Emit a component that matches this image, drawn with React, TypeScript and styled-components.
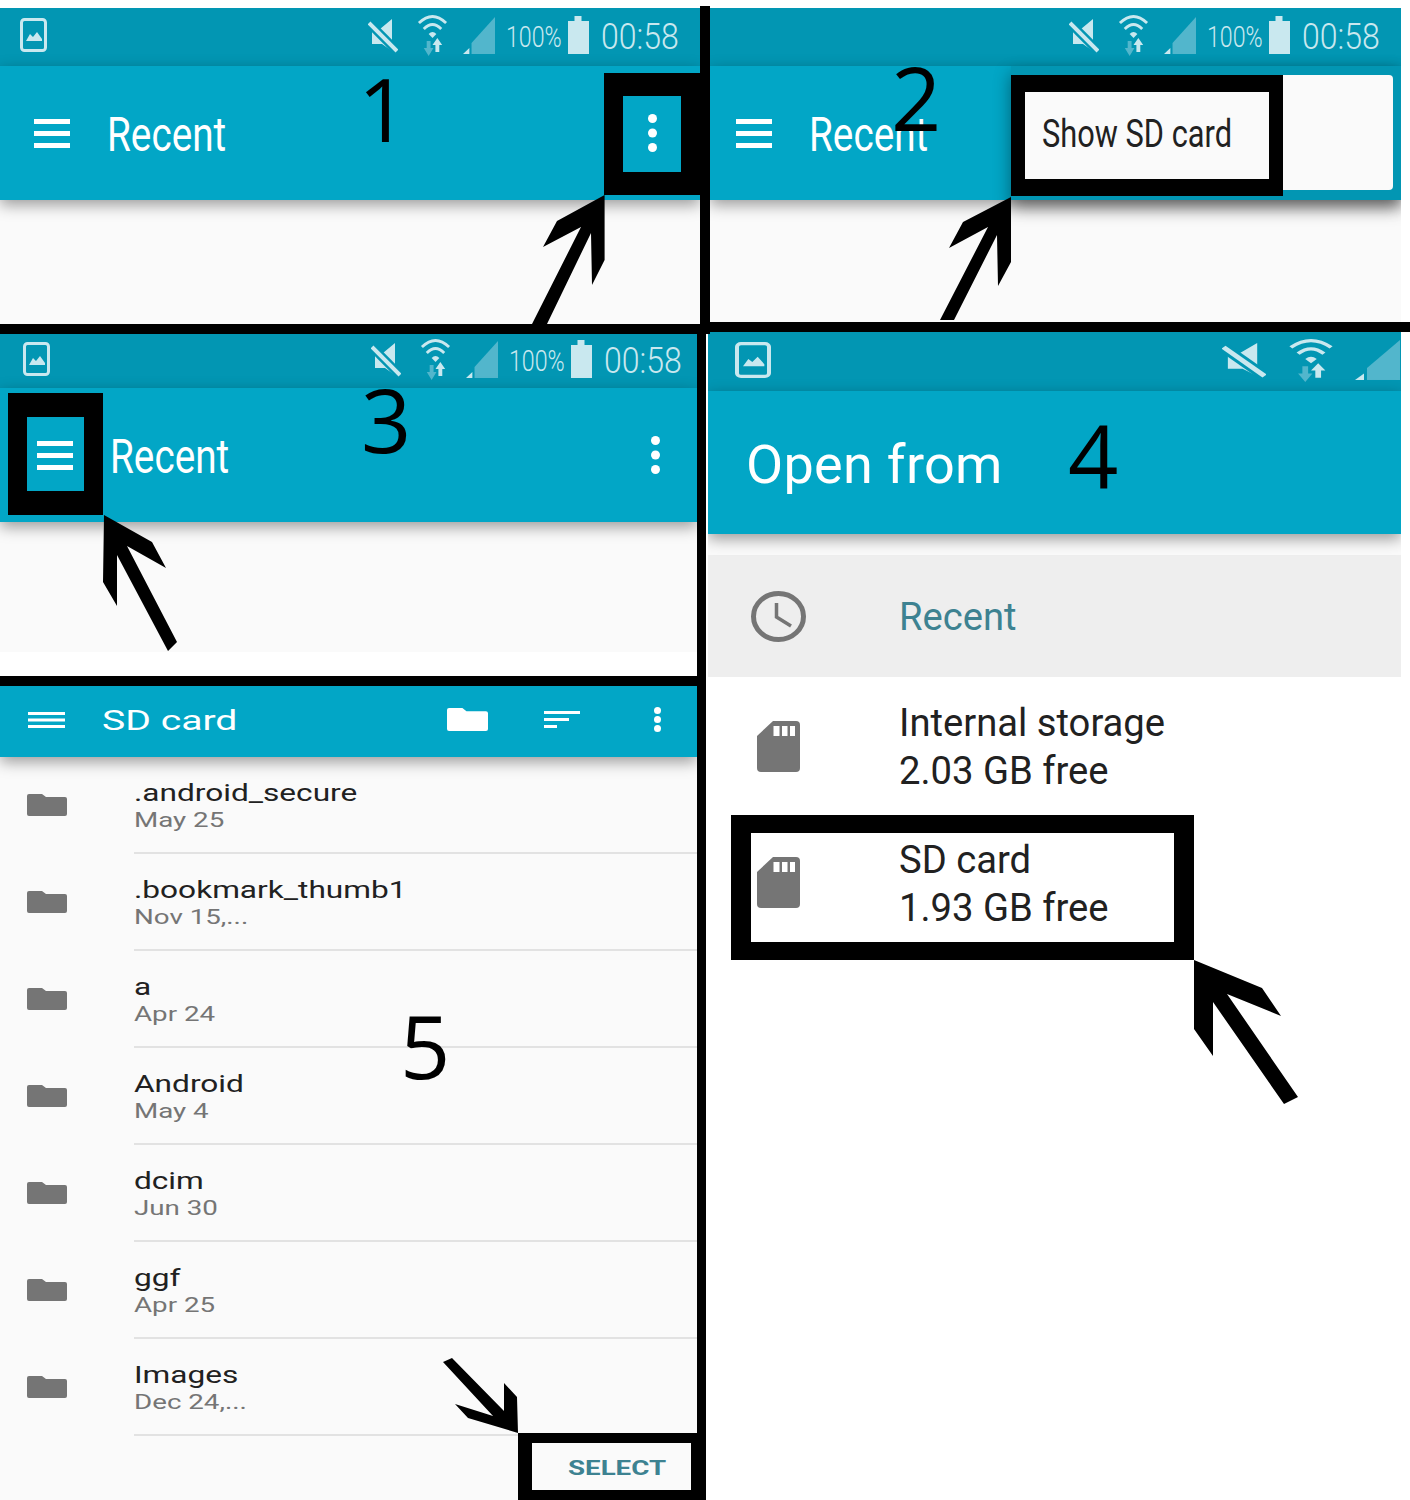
import React from 'react';
import styled, { createGlobalStyle } from 'styled-components';

const STATUS = '#0296b3';
const BAR = '#02a6c6';
const PALE = '#c9e8ef';
const DIM = '#52b6cc';
const GREY = '#757575';
const TEAL = '#3d8291';

const GlobalStyle = createGlobalStyle`
  html, body {
    margin: 0;
    background: #fff;
    font-family: Roboto, "Liberation Sans", sans-serif;
  }
`;

const Sheet = styled.div`
  position: relative;
  width: 1410px;
  height: 1500px;
  overflow: hidden;
  display: grid;
  grid-template-columns: 700px 710px;
`;

const Column = styled.div`
  display: flex;
  flex-direction: column;
  padding-top: 8px;
  min-width: 0;
`;

const Panel = styled.section<{ $left?: number; $width: number; $grow?: boolean }>`
  position: relative;
  margin-left: ${(p) => p.$left ?? 0}px;
  width: ${(p) => p.$width}px;
  flex: ${(p) => (p.$grow ? 1 : 'none')};
  display: flex;
  flex-direction: column;
  overflow: hidden;
`;

const Rule = styled.div<{ $width: number }>`
  width: ${(p) => p.$width}px;
  height: 10px;
  background: #000;
  flex: none;
`;

const StatusBar = styled.div<{ $height: number; $left: number; $right: number }>`
  height: ${(p) => p.$height}px;
  flex: none;
  background: ${STATUS};
  display: flex;
  align-items: center;
  justify-content: space-between;
  padding: 0 ${(p) => p.$right}px 4px ${(p) => p.$left}px;
  box-sizing: border-box;
`;

const StatusGroup = styled.div`
  display: flex;
  align-items: center;
  margin-left: auto;
`;

const Icon = styled.svg<{ $gap?: number }>`
  display: block;
  flex: none;
  margin-left: ${(p) => p.$gap ?? 0}px;
`;

const Stretch = styled.span<{ $sx: number; $w: number }>`
  display: inline-block;
  width: ${(p) => p.$w}px;
  white-space: nowrap;
  transform: scaleX(${(p) => p.$sx});
  transform-origin: left center;
`;

const Percent = styled(Stretch)`
  margin: 4px 0 0 11px;
  font-size: 29px;
  font-weight: 300;
  color: ${PALE};
  line-height: 38px;
`;

const Clock = styled(Stretch)`
  margin: 4px 0 0 12px;
  font-size: 37px;
  font-weight: 300;
  color: ${PALE};
  line-height: 38px;
`;

const Toolbar = styled.header<{ $height: number; $left?: number; $right?: number; $bottom?: number }>`
  position: relative;
  z-index: 1;
  height: ${(p) => p.$height}px;
  flex: none;
  background: ${BAR};
  display: flex;
  align-items: center;
  padding: 0 ${(p) => p.$right ?? 0}px ${(p) => p.$bottom ?? 0}px ${(p) => p.$left ?? 0}px;
  box-sizing: border-box;
  box-shadow: 0 5px 14px rgba(0, 0, 0, 0.38);
  color: #fff;
`;

const RecentTitle = styled(Stretch)`
  margin: 4px 0 0 37px;
  flex: 1;
  font-size: 49px;
  line-height: 60px;
  font-weight: 400;
`;

const OpenTitle = styled.h1`
  margin: 3px 0 0;
  font-size: 54px;
  font-weight: 400;
  letter-spacing: 0.3px;
`;

const SdTitle = styled(Stretch)`
  margin: 2px 0 0 37px;
  font-size: 27px;
  line-height: 30px;
`;

const ToolActions = styled.div`
  margin-left: auto;
  display: flex;
  align-items: center;
`;

const Body = styled.div<{ $height: number }>`
  height: ${(p) => p.$height}px;
  flex: none;
  background: #fafafa;
`;

const WhiteGap = styled.div<{ $height: number }>`
  height: ${(p) => p.$height}px;
  flex: none;
  background: #fff;
`;

const Dimmer = styled.div`
  position: absolute;
  z-index: 2;
  left: 301px;
  right: 0;
  top: 58px;
  height: 134px;
  background: ${STATUS};
  box-shadow: 0 8px 16px rgba(0, 0, 0, 0.42);
`;

const PopupMenu = styled.div`
  position: absolute;
  z-index: 3;
  left: 301px;
  right: 8px;
  top: 67px;
  height: 115px;
  border-radius: 4px;
  background: #fafafa;
  display: flex;
  align-items: center;
  padding: 2px 0 0 31px;
  box-sizing: border-box;
`;

const MenuLabel = styled(Stretch)`
  font-size: 38px;
  color: #212121;
`;

// panel 4, the "Open from" drawer
const DrawerTop = styled.div`
  height: 21px;
  background: #fafafa;
`;

const DrawerRow = styled.div<{ $height: number; $active?: boolean }>`
  height: ${(p) => p.$height}px;
  background: ${(p) => (p.$active ? '#eeeeee' : '#fff')};
  display: flex;
  align-items: center;
  padding-left: 43px;
  box-sizing: border-box;
`;

const DrawerSlot = styled.div`
  width: 55px;
  margin-right: 93px;
  display: flex;
  justify-content: center;
`;

const DrawerText = styled.div<{ $active?: boolean }>`
  font-size: 38.2px;
  line-height: 48px;
  margin-top: 2px;
  color: ${(p) => (p.$active ? TEAL : '#212121')};
`;

// panel 5, the file list
const FileList = styled.div`
  background: #fafafa;
`;

const FileRow = styled.div`
  height: 97px;
  display: flex;
  align-items: flex-start;
  padding-left: 27px;
`;

const FileIconSlot = styled.div`
  margin-top: 37px;
`;

const FileInfo = styled.div`
  margin-left: 67px;
  flex: 1;
  height: 97px;
  box-sizing: border-box;
  padding-top: 21px;
  border-bottom: 2px solid #e2e2e2;
`;

const FileName = styled(Stretch)`
  display: block;
  font-size: 24px;
  line-height: 31px;
  color: #212121;
`;

const FileDate = styled(Stretch)`
  display: block;
  font-size: 21px;
  line-height: 23px;
  color: ${GREY};
`;

const Footer = styled.div`
  flex: 1;
  background: #fafafa;
`;

const SelectButton = styled.div`
  position: absolute;
  left: 518px;
  top: 1433px;
  width: 187px;
  height: 67px;
  box-sizing: border-box;
  background: #fafafa;
  border: solid #000;
  border-width: 10px 14px;
  display: flex;
  align-items: center;
  padding: 2px 0 0 36px;
`;

const SelectLabel = styled(Stretch)`
  font-size: 20px;
  font-weight: 700;
  color: ${TEAL};
`;

// annotation layer drawn over the phone screens
const Overlay = styled.div`
  position: absolute;
  z-index: 5;
  inset: 0;
  pointer-events: none;
`;

const Marker = styled.div<{ $x: number; $y: number; $w: number; $h: number; $bx: string; $by: string }>`
  position: absolute;
  left: ${(p) => p.$x}px;
  top: ${(p) => p.$y}px;
  width: ${(p) => p.$w}px;
  height: ${(p) => p.$h}px;
  box-sizing: border-box;
  border-style: solid;
  border-color: #000;
  border-width: ${(p) => p.$by} ${(p) => p.$bx};
`;

const StepNumber = styled.span<{ $x: number; $y: number }>`
  position: absolute;
  left: ${(p) => p.$x}px;
  top: ${(p) => p.$y}px;
  font-family: "Open Sans", "Noto Sans", sans-serif;
  font-size: 88px;
  line-height: 90px;
  color: #000;
`;

const ArrowLayer = styled.svg`
  position: absolute;
  inset: 0;
`;

const Divider = styled.div<{ $x: number; $y: number; $w: number; $h: number }>`
  position: absolute;
  left: ${(p) => p.$x}px;
  top: ${(p) => p.$y}px;
  width: ${(p) => p.$w}px;
  height: ${(p) => p.$h}px;
  background: #000;
`;

const ARROWS = [
  '604.6,195 557,221 543,247 581,227 532,324 547,324 591,233 592,285 604.6,260',
  '1011,197 963,222 949,248 988,227 940,320 954,320 997,235 998,286 1011,262',
  '104,515 152,542 166,568 127,546 177,642 168,651 117,555 117,606 103,582',
  '1194,960 1262,988 1281,1016 1227,994 1298,1097 1284,1104 1213,1002 1213,1056 1194,1029',
  '518,1433 468,1418 455,1404 493,1416 443,1362 452,1358 504,1411 504,1383 517,1397',
];

const FILES = [
  { name: '.android_secure', date: 'May 25' },
  { name: '.bookmark_thumb1', date: 'Nov 15,...' },
  { name: 'a', date: 'Apr 24' },
  { name: 'Android', date: 'May 4' },
  { name: 'dcim', date: 'Jun 30' },
  { name: 'ggf', date: 'Apr 25' },
  { name: 'Images', date: 'Dec 24,...' },
];

const ImageIcon = ({ w, h }: { w: number; h: number }) => (
  <Icon width={w} height={h} viewBox="0 0 27 34" preserveAspectRatio="none">
    <rect x="1.5" y="1.5" width="24" height="31" rx="3" fill="none" stroke={PALE} strokeWidth="3" />
    <path d="M6 23 L10 16 L13 19 L17 14 L22 21 V23 Z" fill={PALE} />
  </Icon>
);

const MuteIcon = ({ w, h, gap }: { w: number; h: number; gap?: number }) => (
  <Icon $gap={gap} width={w} height={h} viewBox="0 0 30 35" preserveAspectRatio="none">
    <path d="M24 1 V33 L14 26 H4 V11 H12 Z" fill={PALE} />
    <path d="M-2 2 L28 32" stroke={STATUS} strokeWidth="9" />
    <path d="M1 5 L29 33" stroke={PALE} strokeWidth="4" />
  </Icon>
);

const WifiIcon = ({ w, h, gap }: { w: number; h: number; gap?: number }) => (
  <Icon $gap={gap} width={w} height={h} viewBox="0 0 32 42" preserveAspectRatio="none">
    <path d="M2 9 Q16 -4 30 9" fill="none" stroke={PALE} strokeWidth="3" />
    <path d="M7 15 Q16 6 25 15" fill="none" stroke={PALE} strokeWidth="3" />
    <path d="M12 20 Q16 16 20 20 L16 24 Z" fill={PALE} />
    <path d="M12 42 L7 34 H10 V27 H14 V34 H17 Z" fill={DIM} />
    <path d="M21 24 L26 31 H23 V38 H19 V31 H16 Z" fill={PALE} />
  </Icon>
);

const SignalIcon = ({ w, h, gap }: { w: number; h: number; gap?: number }) => (
  <Icon $gap={gap} width={w} height={h} viewBox="0 0 30 37" preserveAspectRatio="none">
    <path d="M30 0 V37 H8 V26 Z" fill={DIM} />
    <path d="M6 31 V37 H0 Z" fill={PALE} />
  </Icon>
);

const BatteryIcon = () => (
  <Icon $gap={6} width={21} height={38} viewBox="0 0 21 38">
    <path d="M6.5 0 H13.5 V5 H21 V38 H0 V5 H6.5 Z" fill={PALE} />
  </Icon>
);

const MenuIcon = ({ w, t, gap }: { w: number; t: number; gap: number }) => {
  const h = t * 3 + gap * 2;
  return (
    <Icon width={w} height={h} viewBox={`0 0 ${w} ${h}`} fill="#fff">
      <rect width={w} height={t} />
      <rect y={t + gap} width={w} height={t} />
      <rect y={(t + gap) * 2} width={w} height={t} />
    </Icon>
  );
};

const DotsIcon = ({ r, gap, ml }: { r: number; gap: number; ml?: number }) => (
  <Icon $gap={ml} width={r * 2} height={r * 2 + gap * 2} viewBox={`0 0 ${r * 2} ${r * 2 + gap * 2}`} fill="#fff">
    <circle cx={r} cy={r} r={r} />
    <circle cx={r} cy={r + gap} r={r} />
    <circle cx={r} cy={r + gap * 2} r={r} />
  </Icon>
);

const FolderIcon = ({ w, h, color, ml }: { w: number; h: number; color: string; ml?: number }) => (
  <Icon $gap={ml} width={w} height={h} viewBox="0 0 40 22" preserveAspectRatio="none">
    <path
      d="M2 0 H15 L19 3 H38 a2 2 0 0 1 2 2 V20 a2 2 0 0 1 -2 2 H2 a2 2 0 0 1 -2 -2 V2 a2 2 0 0 1 2 -2 Z"
      fill={color}
    />
  </Icon>
);

const SortIcon = () => (
  <Icon $gap={56} width={36} height={17} viewBox="0 0 36 17" fill="#fff">
    <rect width="36" height="3" />
    <rect y="7" width="25" height="3" />
    <rect y="14" width="13" height="3" />
  </Icon>
);

const ClockIcon = () => (
  <Icon width={55} height={51} viewBox="0 0 55 51">
    <ellipse cx="27.5" cy="25.5" rx="25" ry="23" fill="none" stroke={GREY} strokeWidth="5" />
    <path d="M25.5 12 V26 L40 35" fill="none" stroke={GREY} strokeWidth="3.5" />
  </Icon>
);

const SdIcon = () => (
  <Icon width={43} height={51} viewBox="0 0 43 51">
    <path
      d="M16 0 H39 a4 4 0 0 1 4 4 V47 a4 4 0 0 1 -4 4 H4 a4 4 0 0 1 -4 -4 V15 Z"
      fill={GREY}
    />
    <rect x="16.5" y="5" width="6" height="10" fill="#fff" />
    <rect x="25" y="5" width="5.5" height="10" fill="#fff" />
    <rect x="33" y="5" width="5" height="10" fill="#fff" />
  </Icon>
);

const PhoneStatus = () => (
  <StatusGroup>
    <MuteIcon w={30} h={35} />
    <WifiIcon w={31} h={42} gap={19} />
    <SignalIcon w={32} h={37} gap={15} />
    <Percent $sx={0.8} $w={56}>100%</Percent>
    <BatteryIcon />
    <Clock $sx={0.865} $w={77}>00:58</Clock>
  </StatusGroup>
);

export default function App() {
  return (
    <Sheet>
      <GlobalStyle />
      <Column>
        <Panel $width={700}>
          <StatusBar $height={58} $left={20} $right={22}>
            <ImageIcon w={27} h={34} />
            <PhoneStatus />
          </StatusBar>
          <Toolbar $height={134} $left={34} $right={43}>
            <MenuIcon w={36} t={5} gap={7} />
            <RecentTitle $sx={0.79} $w={119}>Recent</RecentTitle>
            <DotsIcon r={4.5} gap={14.5} />
          </Toolbar>
          <Body $height={124} />
        </Panel>
        <Rule $width={700} />
        <Panel $width={697}>
          <StatusBar $height={54} $left={23} $right={16}>
            <ImageIcon w={27} h={34} />
            <PhoneStatus />
          </StatusBar>
          <Toolbar $height={134} $left={37} $right={37}>
            <MenuIcon w={36} t={5} gap={7} />
            <RecentTitle $sx={0.79} $w={119}>Recent</RecentTitle>
            <DotsIcon r={4.5} gap={14.5} />
          </Toolbar>
          <Body $height={130} />
          <WhiteGap $height={24} />
        </Panel>
        <Rule $width={700} />
        <Panel $width={697} $grow>
          <Toolbar $height={71} $left={28} $right={36} $bottom={4}>
            <MenuIcon w={37} t={3} gap={3.5} />
            <SdTitle $sx={1.45} $w={135}>SD card</SdTitle>
            <ToolActions>
              <FolderIcon w={41} h={23} color="#fff" />
              <SortIcon />
              <DotsIcon r={3.5} gap={9} ml={74} />
            </ToolActions>
          </Toolbar>
          <FileList>
            {FILES.map((file) => (
              <FileRow key={file.name}>
                <FileIconSlot>
                  <FolderIcon w={40} h={22} color={GREY} />
                </FileIconSlot>
                <FileInfo>
                  <FileName $sx={1.317} $w={300}>{file.name}</FileName>
                  <FileDate $sx={1.32} $w={200}>{file.date}</FileDate>
                </FileInfo>
              </FileRow>
            ))}
          </FileList>
          <Footer />
        </Panel>
      </Column>
      <Column>
        <Panel $left={10} $width={691}>
          <StatusBar $height={58} $left={0} $right={22}>
            <PhoneStatus />
          </StatusBar>
          <Toolbar $height={134} $left={26}>
            <MenuIcon w={36} t={5} gap={7} />
            <RecentTitle $sx={0.79} $w={119}>Recent</RecentTitle>
          </Toolbar>
          <Body $height={122} />
          <Dimmer />
          <PopupMenu>
            <MenuLabel $sx={0.81} $w={190}>Show SD card</MenuLabel>
          </PopupMenu>
        </Panel>
        <Rule $width={710} />
        <Panel $left={8} $width={693}>
          <StatusBar $height={59} $left={27} $right={1}>
            <ImageIcon w={36} h={36} />
            <StatusGroup>
              <MuteIcon w={44} h={36} />
              <WifiIcon w={46} h={44} gap={22} />
              <SignalIcon w={45} h={40} gap={21} />
            </StatusGroup>
          </StatusBar>
          <Toolbar $height={143} $left={38}>
            <OpenTitle>Open from</OpenTitle>
          </Toolbar>
          <DrawerTop />
          <DrawerRow $height={122} $active>
            <DrawerSlot><ClockIcon /></DrawerSlot>
            <DrawerText $active>Recent</DrawerText>
          </DrawerRow>
          <DrawerRow $height={138}>
            <DrawerSlot><SdIcon /></DrawerSlot>
            <DrawerText>Internal storage<br />2.03 GB free</DrawerText>
          </DrawerRow>
          <DrawerRow $height={135}>
            <DrawerSlot><SdIcon /></DrawerSlot>
            <DrawerText>SD card<br />1.93 GB free</DrawerText>
          </DrawerRow>
        </Panel>
      </Column>
      <Overlay>
        <Divider $x={700} $y={6} $w={10} $h={328} />
        <Divider $x={697} $y={334} $w={9} $h={1166} />
        <Marker $x={604} $y={73} $w={96} $h={122} $bx="19px" $by="23px" />
        <Marker $x={1011} $y={75} $w={272} $h={121} $bx="14px" $by="17px" />
        <Marker $x={8} $y={393} $w={95} $h={122} $bx="19px" $by="24px" />
        <Marker $x={731} $y={815} $w={463} $h={145} $bx="20px" $by="18px" />
        <SelectButton>
          <SelectLabel $sx={1.385} $w={97}>SELECT</SelectLabel>
        </SelectButton>
        <StepNumber $x={358} $y={63}>1</StepNumber>
        <StepNumber $x={891} $y={52}>2</StepNumber>
        <StepNumber $x={361} $y={374}>3</StepNumber>
        <StepNumber $x={1068} $y={410}>4</StepNumber>
        <StepNumber $x={400} $y={1000}>5</StepNumber>
        <ArrowLayer width={1410} height={1500} viewBox="0 0 1410 1500">
          {ARROWS.map((points) => (
            <polygon key={points} points={points} fill="#000" />
          ))}
        </ArrowLayer>
      </Overlay>
    </Sheet>
  );
}
